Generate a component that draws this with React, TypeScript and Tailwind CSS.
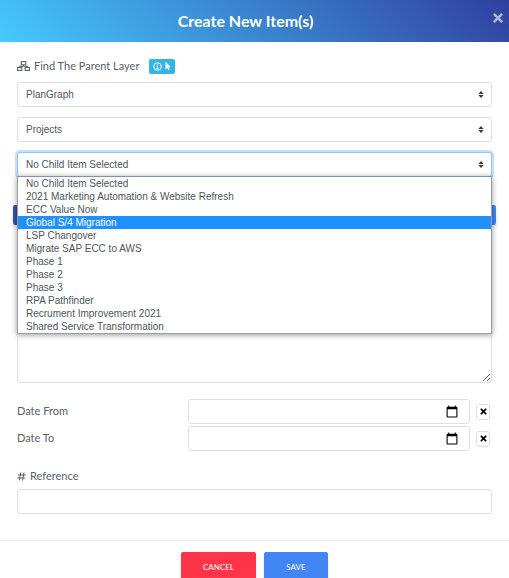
import { FaMousePointer, FaTimes } from "react-icons/fa";

const childItems = [
  "No Child Item Selected",
  "2021 Marketing Automation & Website Refresh",
  "ECC Value Now",
  "Global S/4 Migration",
  "LSP Changover",
  "Migrate SAP ECC to AWS",
  "Phase 1",
  "Phase 2",
  "Phase 3",
  "RPA Pathfinder",
  "Recrument Improvement 2021",
  "Shared Service Transformation",
];

function SitemapIcon() {
  return (
    <svg
      viewBox="0 0 26 20"
      className="h-[10px] w-[13px]"
      fill="none"
      stroke="currentColor"
      strokeWidth="2.2"
      aria-hidden="true"
    >
      <rect x="8.500" y="1.200" width="9" height="6.500" />
      <rect x="1.200" y="13" width="8.500" height="5.800" />
      <rect x="16.300" y="13" width="8.500" height="5.800" />
      <path d="M13 7.700v2.700M5.500 13v-2.600h15V13" />
    </svg>
  );
}

function InfoIcon() {
  return (
    <svg viewBox="0 0 18 18" className="size-[9px]" fill="none" stroke="currentColor" aria-hidden="true">
      <circle cx="9" cy="9" r="7.500" strokeWidth="2" />
      <path d="M9 4v2.500M7 8.500h2V13M7 13h4" strokeWidth="2" />
    </svg>
  );
}

function HashIcon() {
  return (
    <svg
      viewBox="0 0 18 18"
      className="size-[9px]"
      fill="none"
      stroke="currentColor"
      strokeWidth="2"
      aria-hidden="true"
    >
      <path d="M7.500 1l-3 16M14 1l-3 16M2 6h15.500M.5 12H16" />
    </svg>
  );
}

function SelectField({
  label,
  options,
  focused = false,
}: {
  label: string;
  options: string[];
  focused?: boolean;
}) {
  return (
    <div className="relative">
      <select
        aria-label={label}
        className={`block h-[25px] w-full appearance-none rounded-[3px] border bg-white px-2 text-[10px] text-[#4f555c] outline-none ${
          focused
            ? "border-[#8fc5fb] shadow-[0_0_0_2px_#c3dffb]"
            : "border-[#dde1e6]"
        }`}
      >
        {options.map((option) => (
          <option key={option}>{option}</option>
        ))}
      </select>
      <svg
        viewBox="0 0 10 12"
        className="pointer-events-none absolute top-[9px] right-2 h-[7px] w-[6px] text-[#343a40]"
        fill="currentColor"
        aria-hidden="true"
      >
        <path d="M5 0l4.500 5h-9zM5 12L.5 7h9z" />
      </svg>
    </div>
  );
}

function DateRow({ id, label }: { id: string; label: string }) {
  return (
    <div className="flex items-center">
      <label htmlFor={id} className="w-[36%] font-['Lato',sans-serif] text-[11px]">
        {label}
      </label>
      <input
        id={id}
        type="date"
        className="h-[25px] min-w-0 flex-1 rounded-[3px] border border-[#dde1e6] bg-white px-2 text-[10px] outline-none [&::-webkit-calendar-picker-indicator]:size-[14px] [&::-webkit-datetime-edit]:opacity-0"
      />
      <button
        type="button"
        aria-label={`Clear ${label}`}
        className="mr-0.5 ml-1.5 flex h-4 w-[14px] items-center justify-center rounded-[3px] border border-[#dde1e6] bg-white text-black"
      >
        <FaTimes className="size-[9px]" />
      </button>
    </div>
  );
}

export default function App() {
  return (
    <div className="flex h-screen flex-col overflow-hidden bg-white font-['Liberation_Sans',sans-serif] text-[#5a6067]">
      <header className="flex h-[42px] shrink-0 bg-[linear-gradient(45deg,#45cafc,#303f9f)] pr-1">
        <h1 className="flex-1 self-center text-center font-['Lato',sans-serif] text-[16px] font-bold text-white">
          Create New Item(s)
        </h1>
        <button type="button" aria-label="Close" className="mt-[11px] size-[14px] text-white/60">
          <FaTimes className="size-[14px]" />
        </button>
      </header>

      <main className="px-[17px] pt-4">
        <div className="flex h-4 items-center">
          <SitemapIcon />
          <h2 className="ml-1 font-['Lato',sans-serif] text-[11px]">Find The Parent Layer</h2>
          <button
            type="button"
            aria-label="Layer help"
            className="ml-2.5 flex h-[15px] w-[26px] items-center justify-center gap-0.5 rounded-[2px] bg-[#33b5e5] text-white"
          >
            <InfoIcon />
            <FaMousePointer className="size-[8px]" />
          </button>
        </div>

        <div className="relative z-10 mt-2 flex flex-col gap-2.5">
          <SelectField label="Plan" options={["PlanGraph"]} />
          <SelectField label="Layer" options={["Projects"]} />
          <SelectField label="Child item" options={childItems} focused />
          <ul
            role="listbox"
            aria-label="Child items"
            className="absolute top-full right-0 left-0 -mt-px border border-[#9a9da1] border-t-[#7f93ac] bg-white text-[10px] leading-[13px] text-[#4f555c] shadow-[0_1px_6px_rgba(0,0,0,0.4)]"
          >
            {childItems.map((item) => (
              <li
                key={item}
                role="option"
                aria-selected={item === "Global S/4 Migration"}
                className="px-2 aria-selected:bg-[#1e90ff] aria-selected:text-white"
              >
                {item}
              </li>
            ))}
          </ul>
        </div>

        <div className="-mx-1 mt-7 h-5 rounded-[2px] bg-linear-to-r from-[#3353b0] to-[#4285f4] shadow-md" />
        <textarea
          aria-label="Description"
          className="mt-6 block h-[134px] w-full rounded-[3px] border border-[#dde1e6] bg-white outline-none"
        />

        <div className="mt-4 flex flex-col gap-0.5">
          <DateRow id="date-from" label="Date From" />
          <DateRow id="date-to" label="Date To" />
        </div>

        <label
          htmlFor="reference"
          className="mt-[17px] flex h-4 items-center gap-1 font-['Lato',sans-serif] text-[11px]"
        >
          <HashIcon />
          Reference
        </label>
        <input
          id="reference"
          type="text"
          className="mt-[5px] block h-[25px] w-full rounded-[3px] border border-[#dde1e6] bg-white px-2 text-[10px] outline-none"
        />
      </main>

      <footer className="mt-[26px] flex shrink-0 justify-center gap-2 border-t border-[#e9ecef] pt-[11px] font-['Lato',sans-serif] text-[8px] text-white">
        <button type="button" className="h-[30px] w-[75px] rounded-[2px] bg-[#ff3547] shadow-md">
          CANCEL
        </button>
        <button type="button" className="h-[30px] w-16 rounded-[2px] bg-[#4285f4] shadow-md">
          SAVE
        </button>
      </footer>
    </div>
  );
}
